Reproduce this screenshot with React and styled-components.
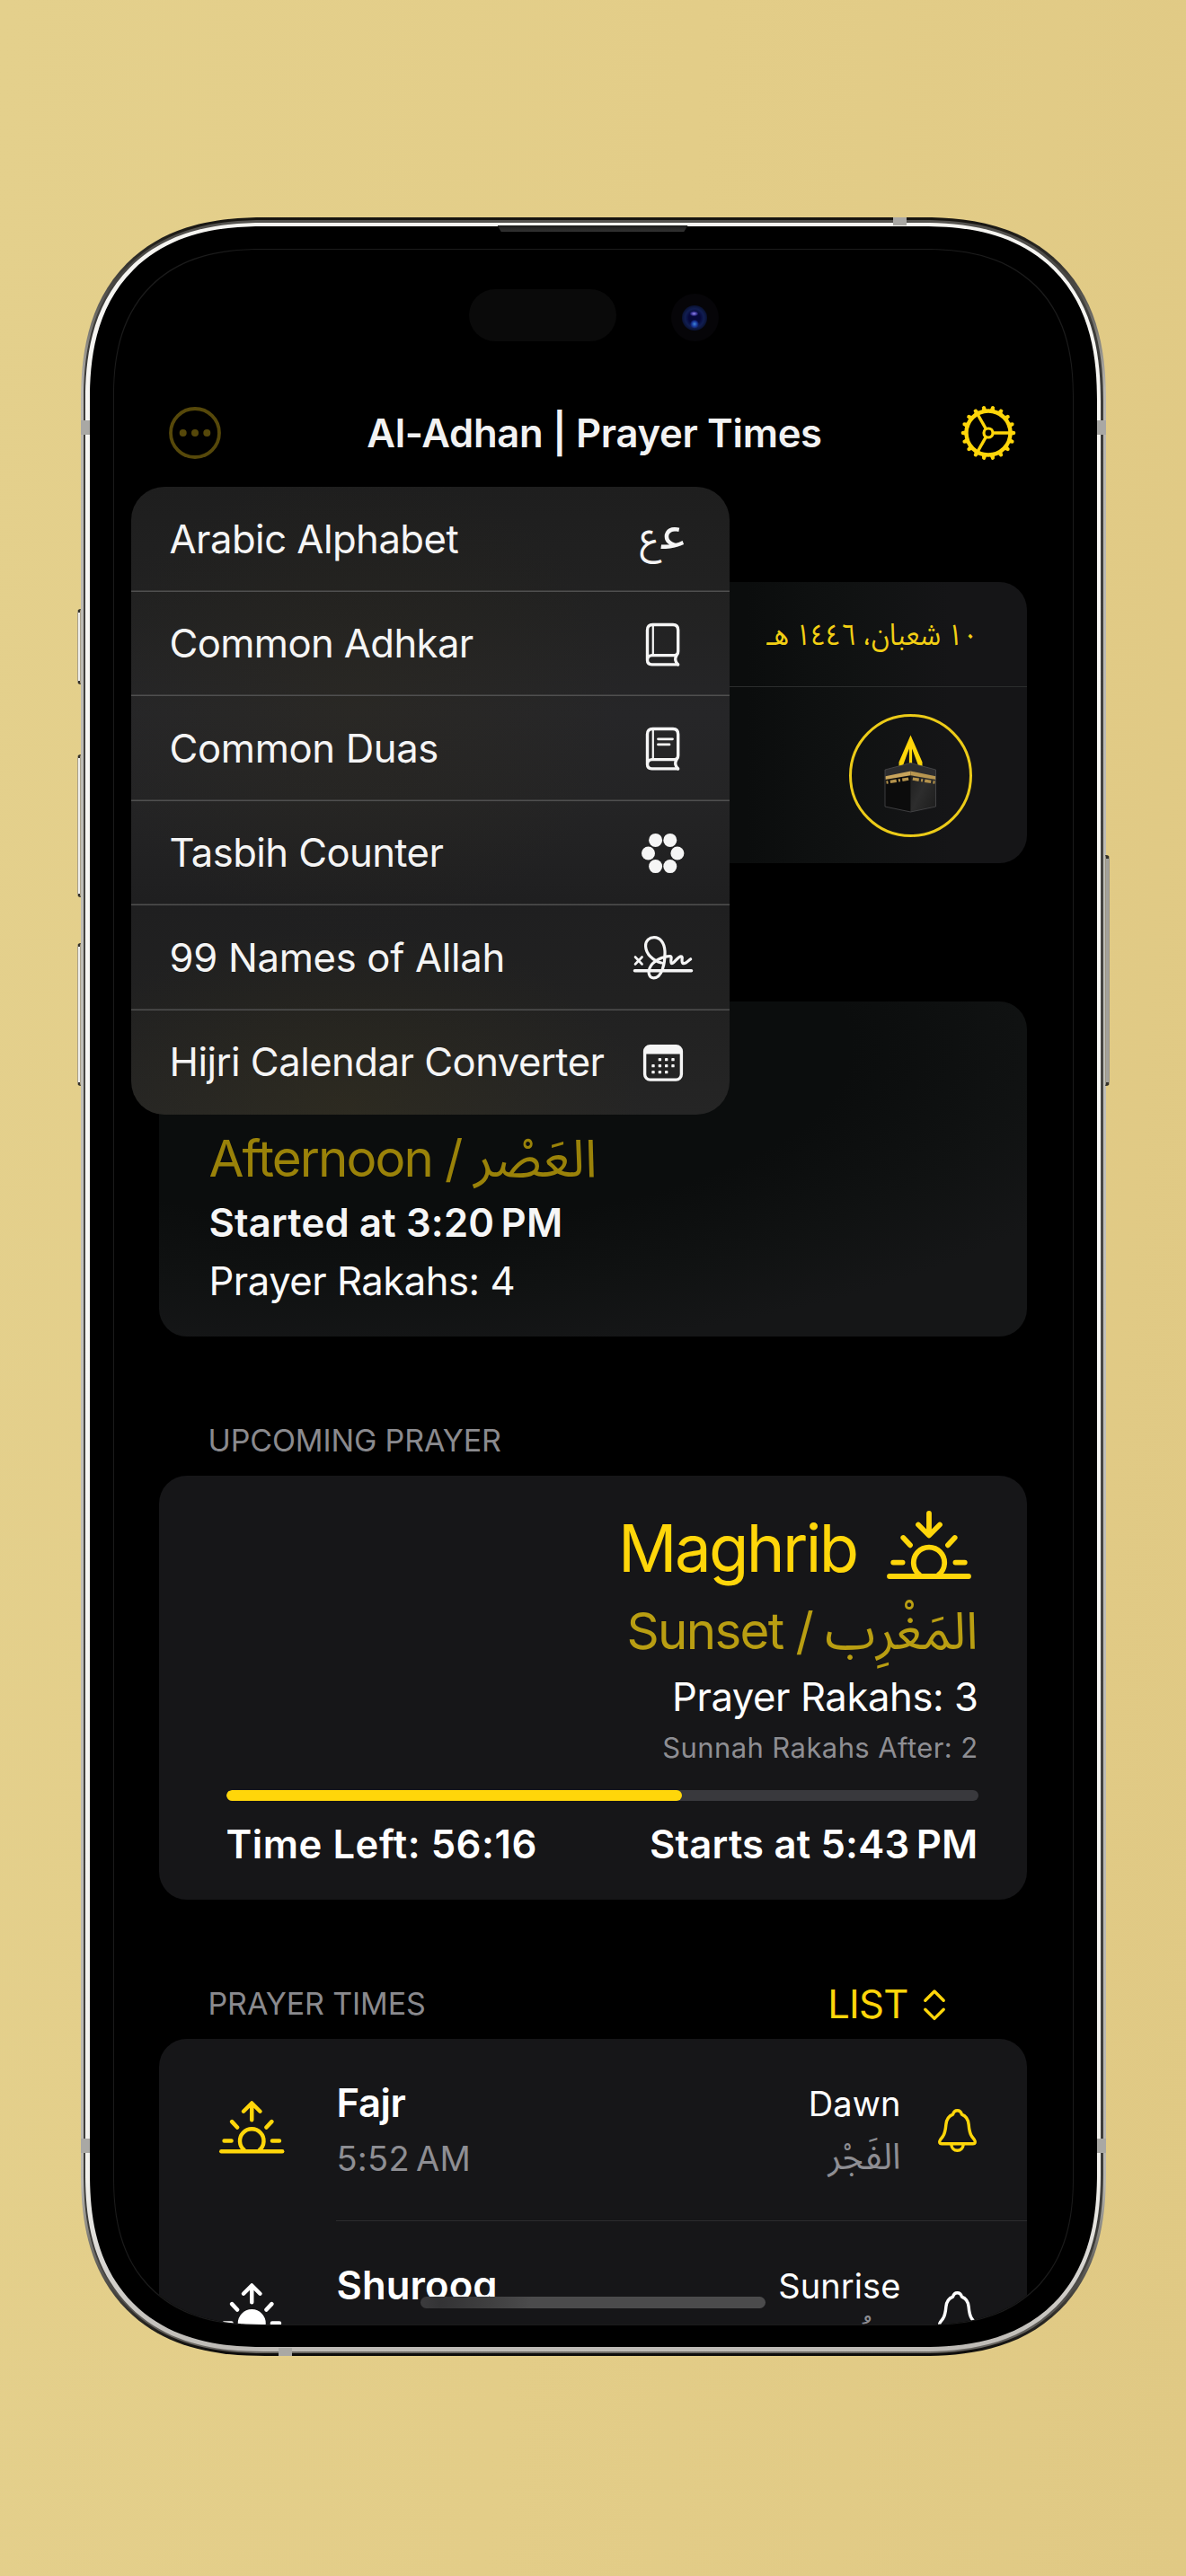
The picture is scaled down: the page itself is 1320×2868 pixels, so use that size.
import React from "react";
import styled, { createGlobalStyle, css } from "styled-components";

const gold = "#ffd60a";
const sans = `Inter, "Liberation Sans", sans-serif`;

const GlobalStyle = createGlobalStyle`
  html, body { margin: 0; padding: 0; }
  body { background: #e2cc87; font-family: ${sans}; }
  * { box-sizing: border-box; }
  svg { display: block; flex: none; overflow: visible; }
`;

/* Rounded corners, with the softer superellipse curve where the browser has it. */
const corner = (round, soft) => css`
  border-radius: ${round}px;
  @supports (corner-shape: superellipse(1.27)) {
    border-radius: ${soft}px;
    corner-shape: superellipse(1.27);
  }
`;

/* ---------- device ---------- */

const Page = styled.div`
  width: 1320px;
  height: 2868px;
  padding-top: 242px;
  display: flex;
  justify-content: center;
  align-items: flex-start;
  overflow: hidden;
  background: linear-gradient(95deg, #e4d08c 0%, #e3cd88 50%, #e0c984 100%);
`;

const Phone = styled.div`
  position: relative;
  width: 1141px;
  height: 2381px;
  padding: 3px;
  ${corner(178, 205)}
  background: linear-gradient(180deg, #15130f 0, #2a2824 40px, #b9b7b0 190px, #c2c1bb 50%, #b9b7b0 2190px, #2a2824 2340px, #0d0c0a 100%);
`;

const MidRing = styled.div`
  height: 100%;
  padding: 2.5px;
  ${corner(175, 202)}
  background: linear-gradient(180deg, #55534f 0, #3d3c39 120px, #4a4946 50%, #3d3c39 2260px, #6b6863 100%);
`;

const SteelRing = styled.div`
  height: 100%;
  padding: 4.5px;
  ${corner(172, 199)}
  background: linear-gradient(180deg, #f6f5f1 0, #f7f7f5 50%, #f1f0ec 92%, #bdbab5 100%);
`;

const Bezel = styled.div`
  height: 100%;
  padding: 26px 27px 25px;
  ${corner(168, 194)}
  background: #000;
`;

const Screen = styled.main`
  position: relative;
  height: 100%;
  ${corner(142, 165)}
  overflow: hidden;
  background: #000;
  box-shadow: 0 0 0 1px #1b1b1b;
`;

const SideButton = styled.div`
  position: absolute;
  top: ${(p) => p.$top}px;
  ${(p) => (p.$side === "left" ? "left: -4px" : "right: -4px")};
  width: 4.5px;
  height: ${(p) => p.$height}px;
  border: 1px solid ${(p) => (p.$side === "left" ? "#a9a089" : "#9b9585")};
  border-top: 4px solid #35322b;
  border-bottom: 4px solid #35322b;
  border-radius: ${(p) => (p.$side === "left" ? "4px 0 0 4px" : "0 4px 4px 0")};
  background: ${(p) => (p.$side === "left" ? "#efeeea" : "#a3a19a")};
`;

const AntennaBand = styled.div`
  position: absolute;
  background: #a9a8a4;
  ${(p) => (p.$edge === "top" || p.$edge === "bottom"
    ? css`width: 15px; height: 9px; left: ${p.$at}px;`
    : css`width: 10px; height: 16px; top: ${p.$at}px;`)}
  ${(p) => p.$edge}: 0;
`;

const Speaker = styled.div`
  position: absolute;
  top: 9px;
  left: 464px;
  width: 212px;
  height: 7px;
  background: linear-gradient(180deg, #1a1a1a, #333);
  clip-path: polygon(0 0, 100% 0, 98% 100%, 2% 100%);
`;

/* ---------- top of the screen ---------- */

const StatusArea = styled.div`
  height: 174px;
  padding: 44px 0 0 395px;
  display: flex;
  gap: 61px;
`;

const SensorPill = styled.div`
  width: 164px;
  height: 58px;
  border-radius: 29px;
  background: #0a0a0a;
`;

const CameraWell = styled.div`
  width: 53px;
  height: 53px;
  margin-top: 5px;
  border-radius: 50%;
  background: #060508;
  display: grid;
  place-items: center;
`;

const Lens = styled.div`
  width: 28px;
  height: 28px;
  border-radius: 50%;
  background:
    radial-gradient(ellipse 5px 3px at 48% 33%, #9a8df0 0, rgba(80, 70, 190, 0.7) 60%, transparent 100%),
    radial-gradient(ellipse 5px 5px at 50% 74%, #3f86d8 0, rgba(30, 70, 190, 0.7) 60%, transparent 100%),
    radial-gradient(circle at 50% 50%, #06083a 0 32%, #111e52 52%, #0a1232 70%);
`;

const NavBar = styled.header`
  height: 60px;
  padding: 0 60px;
  display: flex;
  justify-content: space-between;
  align-items: center;
`;

const NavTitle = styled.h1`
  margin: 1px 0 0 9px;
  font-size: 43.6px;
  font-weight: 600;
  line-height: 60px;
  letter-spacing: -0.31px;
  white-space: nowrap;
  color: #f2f2f2;
`;

/* ---------- text ---------- */

const Text = styled.div`
  font-size: ${(p) => p.$size || 43.6}px;
  font-weight: ${(p) => p.$weight || 400};
  line-height: ${(p) => p.$line || 60}px;
  letter-spacing: ${(p) => p.$track || 0}px;
  color: ${(p) => p.$color || "#fff"};
  white-space: nowrap;
`;

const Arabic = styled.bdi`
  font-family: "Noto Sans Arabic", "DejaVu Sans", sans-serif;
  font-size: ${(p) => p.$size}px;
  line-height: 0;
  letter-spacing: 0;
`;

const HijriDate = styled(Text)`
  color: #f2cf14;
  transform: scaleX(0.89);
  transform-origin: right center;
`;

/* ---------- cards ---------- */

const Content = styled.div`
  padding: 136px 51px 0 50px;
  display: flex;
  flex-direction: column;
`;

const Card = styled.section`
  border-radius: 31px;
  background: #161618;
  flex: none;
`;

const DateCard = styled(Card)`
  height: 313px;
  background: linear-gradient(90deg, #0b0d0d 0, #0b0d0d 655px, #101212 770px, #151517 880px);
`;

const DateRow = styled.div`
  height: 117px;
  padding-right: 54px;
  border-bottom: 1.5px solid #2b2d2d;
  display: flex;
  justify-content: flex-end;
  align-items: center;
`;

const QiblaRow = styled.div`
  height: 196px;
  padding: 30px 61px 0 0;
  display: flex;
  justify-content: flex-end;
`;

const CurrentCard = styled(Card)`
  height: 373px;
  margin-top: 154px;
  padding: 137px 55px 0 56px;
  background: radial-gradient(ellipse 880px 340px at 260px 50px, #0b0d0d 0 58%, #101212 80%, #151617 100%);
`;

const SectionHeader = styled.div`
  height: 155px;
  padding: 0 91px 0 55px;
  display: flex;
  justify-content: space-between;
  align-items: flex-end;
`;

const SectionTitle = styled(Text)`
  padding-bottom: 19px;
`;

const ListPicker = styled.button`
  all: unset;
  padding-bottom: 8.5px;
  display: flex;
  align-items: center;
  gap: 17px;
`;

const UpcomingCard = styled(Card)`
  height: 472px;
  padding: 36px 54px 0 75px;
  display: flex;
  flex-direction: column;
  align-items: flex-end;
`;

const PrayerTitle = styled.div`
  display: flex;
  align-items: flex-start;
  gap: 33px;
  padding-right: 8px;
  svg { margin-top: 2.5px; }
`;

const Progress = styled.div`
  align-self: stretch;
  height: 12px;
  margin-top: 18px;
  border-radius: 6px;
  background: #39393d;
  overflow: hidden;
`;

const ProgressFill = styled.div`
  width: ${(p) => p.$percent}%;
  height: 100%;
  border-radius: 6px;
  background: ${gold};
`;

const TimesRow = styled.div`
  align-self: stretch;
  margin-top: 19px;
  display: flex;
  justify-content: space-between;
`;

const ListCard = styled(Card)`
  border-radius: 31px 31px 0 0;
`;

const Row = styled.div`
  height: 203.3px;
  padding: 42px 56px 0 67.5px;
  display: grid;
  grid-template-columns: 130.5px 1fr auto 84px;
  align-items: start;
`;

const RowIcon = styled.div`
  padding-top: 26.5px;
`;

const RowBell = styled.div`
  padding-top: 35.5px;
  justify-self: end;
`;

const RowText = styled.div`
  text-align: ${(p) => (p.$end ? "right" : "left")};
`;

const RowDivider = styled.div`
  height: 1.5px;
  margin: -1.5px 0 0 197px;
  background: #2c2c2e;
`;

/* ---------- overlays ---------- */

const Menu = styled.nav`
  position: absolute;
  top: 264px;
  left: 19px;
  width: 666px;
  height: 699px;
  border-radius: 37px;
  overflow: hidden;
  background:
    radial-gradient(ellipse 300px 260px at 250px 240px, rgba(60, 50, 20, 0.16), transparent),
    radial-gradient(ellipse 330px 200px at 240px 690px, rgba(70, 60, 20, 0.24), transparent),
    linear-gradient(180deg, #1e1e1e 0%, #222222 20%, #262628 36%, #242425 50%, #1f1f20 66%, #212121 82%, #252525 100%);
`;

const MenuItem = styled.div`
  height: 116.5px;
  padding: 1px 29px 0 43px;
  display: flex;
  align-items: center;
  justify-content: space-between;
  box-shadow: inset 0 -1.5px 0 #505050;
  &:last-child { box-shadow: none; }
`;

const MenuGlyph = styled.div`
  width: 90px;
  display: flex;
  justify-content: center;
  align-items: center;
`;

const AinPair = styled.div`
  display: flex;
  align-items: baseline;
  gap: 2px;
  direction: ltr;
  color: #f5f5f5;
  line-height: 60px;
  padding-bottom: 10px;
`;

const HomeIndicator = styled.div`
  position: absolute;
  left: 341px;
  bottom: 18px;
  width: 384px;
  height: 13px;
  border-radius: 7px;
  background: linear-gradient(90deg, #3b3b3d 0, #333335 6%, #3f3f40 20%, #4b4b4c 32%, #4b4b4c 100%);
`;

/* ---------- icons ---------- */

const MoreIcon = () => (
  <svg width="60" height="60" viewBox="0 0 60 60">
    <circle cx="30" cy="30" r="27" fill="none" stroke="#56480a" strokeWidth="3.8" />
    {[16.7, 30, 43.3].map((x) => <circle key={x} cx={x} cy="30" r="4" fill="#56480a" />)}
  </svg>
);

const GearIcon = () => (
  <svg width="66" height="66" viewBox="-33 -33 66 66" stroke={gold} fill="none">
    <circle r="24.5" strokeWidth="4.4" />
    <circle r="5" strokeWidth="3.2" />
    {Array.from({ length: 18 }, (_, i) => (
      <path key={i} d="M25.5 -2.7L29.6 -1.7Q31.2 0 29.6 1.7L25.5 2.7Z" fill={gold} stroke="none" transform={`rotate(${i * 20})`} />
    ))}
    {[0, 120, 240].map((a) => <path key={a} d="M6 0H24" strokeWidth="3.4" transform={`rotate(${a})`} />)}
  </svg>
);

const HorizonSun = ({ width, color, up, filled }) => (
  <svg width={width} height={(width * 76) / 94} viewBox="0 0 94 76" fill="none" stroke={color} strokeWidth="5.8" strokeLinecap="round" strokeLinejoin="round">
    <path d={up ? "M47 27.5V4M35 15.2L47 3.2L59 15.2" : "M47 3V27M35 15.5L47 27.5L59 15.5"} />
    <path d="M18.3 30L26 38.3M75.7 30L68 38.3M7.2 57.6H17.6M76.4 57.6H86.8" />
    <path d="M36 71A17.2 17.2 0 1 1 58 71" fill={filled ? color : "none"} />
    <path d="M3 73H91" />
  </svg>
);

const BellIcon = ({ color }) => (
  <svg width="43" height="48" viewBox="0 0 42.6 47.4" fill="none" stroke={color} strokeWidth="3.4" strokeLinejoin="round">
    <path d="M21.3 1.7C18.5 1.7 17 3.6 16.4 6C11 8 9.3 12 8.8 17C8.3 23 7.8 26.5 5.5 30L2.4 34.2C1 36.4 1.7 38.4 4 38.4H38.6C40.9 38.4 41.6 36.4 40.2 34.2L37.1 30C34.8 26.5 34.3 23 33.8 17C33.3 12 31.6 8 26.2 6C25.6 3.6 24.1 1.7 21.3 1.7Z" />
    <path d="M14.6 39C15 43.4 17.8 45.8 21.3 45.8S27.6 43.4 28 39" />
  </svg>
);

const BookIcon = ({ lines }) => (
  <svg width="37.3" height="47.4" viewBox="0 0 37.3 47.4" fill="none" stroke="#f5f5f5" strokeWidth="3.4" strokeLinejoin="round" strokeLinecap="round">
    <path d="M35.6 45.9H6.5Q1.5 45.6 1.5 41V7.5Q1.5 1.5 7.5 1.5H30Q35.7 1.5 35.7 7.5V31Q35.7 35.6 31.5 35.6H6.5Q1.5 36 1.5 41" />
    <path d="M34 35.6Q30.8 41 35.6 45.9" />
    <path d="M7.8 2V35" strokeWidth="2.2" />
    {lines && <path d="M13.5 12.8H29.5M13.5 18.9H26" strokeWidth="2.8" />}
  </svg>
);

const BeadsIcon = () => (
  <svg width="47.4" height="44" viewBox="0 0 47.4 44" fill="#f5f5f5">
    {[[15.6, 7.4], [31.8, 7.4], [7.5, 22], [39.9, 22], [15.6, 36.6], [31.8, 36.6]].map(([x, y]) => (
      <circle key={`${x}-${y}`} cx={x} cy={y} r="7.5" />
    ))}
  </svg>
);

const SignatureIcon = () => (
  <svg width="66" height="48.6" viewBox="0 0 66 48.6" fill="none" stroke="#f5f5f5" strokeWidth="3.2" strokeLinecap="round" strokeLinejoin="round">
    <path d="M2 23.5L9.6 31.5M9.6 23.5L2 31.5" strokeWidth="2.6" />
    <path d="M1.5 38.8H64.5" strokeWidth="3.6" />
    <path d="M31 30C22 28 14 20 13.6 11.8C13.2 5 18 1.7 23 1.7C30 1.7 34.6 8 35 17C35.4 30 32 46.8 22.5 46.9C17.5 46.9 16 41 18 36C21 28 32 22.7 41 22.5C43.6 22.8 40.6 27.4 42.3 30.5C45 31.6 49 23 53 22.8C56 23 52.4 28 55 30.5C58 31.8 60.4 27.8 63.6 25.8" />
  </svg>
);

const CalendarIcon = () => (
  <svg width="44" height="40.7" viewBox="0 0 44 40.7" fill="none" stroke="#f5f5f5">
    <rect x="1.6" y="1.6" width="40.8" height="37.5" rx="6" strokeWidth="3.4" />
    <path d="M1.6 10.6V7Q1.6 1.6 7 1.6H37Q42.4 1.6 42.4 7V10.6Z" fill="#f5f5f5" stroke="none" />
    {[[18.4, 16.6], [25.7, 16.6], [33, 16.6], [11, 23.6], [18.4, 23.6], [25.7, 23.6], [33, 23.6], [11, 30.6], [18.4, 30.6], [25.7, 30.6]].map(([x, y]) => (
      <rect key={`${x}-${y}`} x={x - 1.7} y={y - 1.7} width="3.4" height="3.4" rx="0.9" fill="#f5f5f5" stroke="none" />
    ))}
  </svg>
);

const ChevronsIcon = () => (
  <svg width="24" height="34" viewBox="0 0 24 34" fill="none" stroke={gold} strokeWidth="3.4" strokeLinecap="round" strokeLinejoin="round">
    <path d="M1.8 12.2L12 2L22.2 12.2M1.8 22.2L12 32.4L22.2 22.2" />
  </svg>
);

const QiblaIcon = () => (
  <svg width="137" height="137" viewBox="-68.5 -68.5 137 137">
    <defs>
      <linearGradient id="kaabaRight" x1="0" y1="0" x2="1" y2="1">
        <stop offset="0" stopColor="#1b1b1b" />
        <stop offset="0.5" stopColor="#2d2d2d" />
        <stop offset="1" stopColor="#1c1c1c" />
      </linearGradient>
    </defs>
    <circle r="67" fill="none" stroke="#eccb18" strokeWidth="3" />
    <path d="M0 -45L-13 -15V-9L-8.6 -11L-1.6 -30V-10H1.6V-30L8.6 -11L13 -9V-15Z" fill={gold} />
    <path d="M-28.5 -6.5L0 -14V40.5L-28.5 34.5Z" fill="#0c0c0c" />
    <path d="M28 -6.5L0 -14V40.5L28 34.5Z" fill="url(#kaabaRight)" />
    <path d="M-28.5 -6.5L0 -14L28 -6.5V3L0 -4L-28.5 3Z" fill="#2c2c2e" />
    <path d="M-28 0.8L0 -5V-0.2L-28 4.4Z" fill="#c9a55c" />
    <path d="M28 0.8L0 -5V-0.2L28 4.4Z" fill="#b89650" />
    <path d="M-27 7.6L-1 3.4M27 7.6L1 3.4" stroke="#b4924c" strokeWidth="3.4" strokeDasharray="2 2.4 7 2.2" />
    <path d="M-28.5 -6.5V34.5L0 40.5L28 34.5V-6.5L0 -14Z" fill="none" stroke="#4a4a4c" strokeWidth="0.8" />
  </svg>
);

/* ---------- data ---------- */

const menuItems = [
  { label: "Arabic Alphabet", track: -0.51, glyph: <AinPair><Arabic $size={42}>ع</Arabic><Arabic $size={54}>ﻋ</Arabic></AinPair> },
  { label: "Common Adhkar", track: -0.6, glyph: <BookIcon /> },
  { label: "Common Duas", track: -0.34, glyph: <BookIcon lines /> },
  { label: "Tasbih Counter", track: -0.58, glyph: <BeadsIcon /> },
  { label: "99 Names of Allah", track: -0.3, glyph: <SignatureIcon /> },
  { label: "Hijri Calendar Converter", track: -0.51, glyph: <CalendarIcon /> },
];

const prayers = [
  { name: "Fajr", track: -0.41, time: "5:52\u202fAM", english: "Dawn", arabic: "الفَجْر", color: gold },
  { name: "Shurooq", track: 0.1, time: "7:08\u202fAM", english: "Sunrise", arabic: "الشُرُوق", color: "#fff", filled: true },
];

const PrayerRow = ({ prayer }) => (
  <Row>
    <RowIcon><HorizonSun width={72.5} color={prayer.color} up filled={prayer.filled} /></RowIcon>
    <RowText>
      <Text $weight={600} $track={prayer.track}>{prayer.name}</Text>
      <Text $size={38} $line={63} $track={0.26} $color="#8e8e93">{prayer.time}</Text>
    </RowText>
    <RowText $end>
      <Text $size={38} $track={0.1}>{prayer.english}</Text>
      <Text $size={38} $line={58} $color="#8e8e93"><Arabic $size={40}>{prayer.arabic}</Arabic></Text>
    </RowText>
    <RowBell><BellIcon color={prayer.color} /></RowBell>
  </Row>
);

export default function App() {
  return (
    <>
      <GlobalStyle />
      <Page>
        <Phone>
          <SideButton $side="left" $top={436} $height={84} />
          <SideButton $side="left" $top={598} $height={159} />
          <SideButton $side="left" $top={808} $height={159} />
          <SideButton $side="right" $top={710} $height={257} />
          <MidRing>
            <SteelRing>
              <Bezel>
                <Screen>
                  <StatusArea>
                    <SensorPill />
                    <CameraWell><Lens /></CameraWell>
                  </StatusArea>
                  <NavBar>
                    <MoreIcon />
                    <NavTitle>Al-Adhan | Prayer Times</NavTitle>
                    <GearIcon />
                  </NavBar>
                  <Content>
                    <DateCard>
                      <DateRow>
                        <HijriDate $size={33}><Arabic $size={33} dir="rtl">١٠ شعبان، ١٤٤٦ هـ</Arabic></HijriDate>
                      </DateRow>
                      <QiblaRow><QiblaIcon /></QiblaRow>
                    </DateCard>

                    <CurrentCard>
                      <Text $size={56.5} $line={75} $track={-1.9} $color="#9a8209">
                        Afternoon / <Arabic $size={58}>العَصْر</Arabic>
                      </Text>
                      <Text $weight={600} $line={70} $track={0.18} $color="#f6f6f6">Started at 3:20{"\u202f"}PM</Text>
                      <Text $track={-0.48} $color="#fafafa">Prayer Rakahs: 4</Text>
                    </CurrentCard>

                    <SectionHeader>
                      <SectionTitle $size={34} $line={40} $track={-0.13} $color="#8a8a8e">UPCOMING PRAYER</SectionTitle>
                    </SectionHeader>
                    <UpcomingCard>
                      <PrayerTitle>
                        <Text $size={72.5} $line={90} $track={-2.64} $color={gold}>Maghrib</Text>
                        <HorizonSun width={94} color={gold} />
                      </PrayerTitle>
                      <Text $size={56.5} $line={94} $track={-1.75} $color="#b99e12">
                        Sunset / <Arabic $size={57}>المَغْرِب</Arabic>
                      </Text>
                      <Text $line={54} $track={-0.41}>Prayer Rakahs: 3</Text>
                      <Text $size={31} $line={58} $track={0.41} $color="#8e8e93">Sunnah Rakahs After: 2</Text>
                      <Progress><ProgressFill $percent={60.6} /></Progress>
                      <TimesRow>
                        <Text $weight={600} $track={0.54}>Time Left: 56:16</Text>
                        <Text $weight={600} $track={0.2}>Starts at 5:43{"\u202f"}PM</Text>
                      </TimesRow>
                    </UpcomingCard>

                    <SectionHeader>
                      <SectionTitle $size={34} $line={40} $track={-0.11} $color="#8a8a8e">PRAYER TIMES</SectionTitle>
                      <ListPicker>
                        <Text $track={-0.78} $color={gold}>LIST</Text>
                        <ChevronsIcon />
                      </ListPicker>
                    </SectionHeader>
                    <ListCard>
                      <PrayerRow prayer={prayers[0]} />
                      <RowDivider />
                      <PrayerRow prayer={prayers[1]} />
                    </ListCard>
                  </Content>

                  <Menu>
                    {menuItems.map((item) => (
                      <MenuItem key={item.label}>
                        <Text $track={item.track} $color="#f5f5f5">{item.label}</Text>
                        <MenuGlyph>{item.glyph}</MenuGlyph>
                      </MenuItem>
                    ))}
                  </Menu>
                  <HomeIndicator />
                </Screen>
              </Bezel>
            </SteelRing>
          </MidRing>
          <Speaker />
          <AntennaBand $edge="top" $at={904} />
          <AntennaBand $edge="bottom" $at={220} />
          <AntennaBand $edge="left" $at={226} />
          <AntennaBand $edge="right" $at={226} />
          <AntennaBand $edge="left" $at={2139} />
          <AntennaBand $edge="right" $at={2139} />
        </Phone>
      </Page>
    </>
  );
}
